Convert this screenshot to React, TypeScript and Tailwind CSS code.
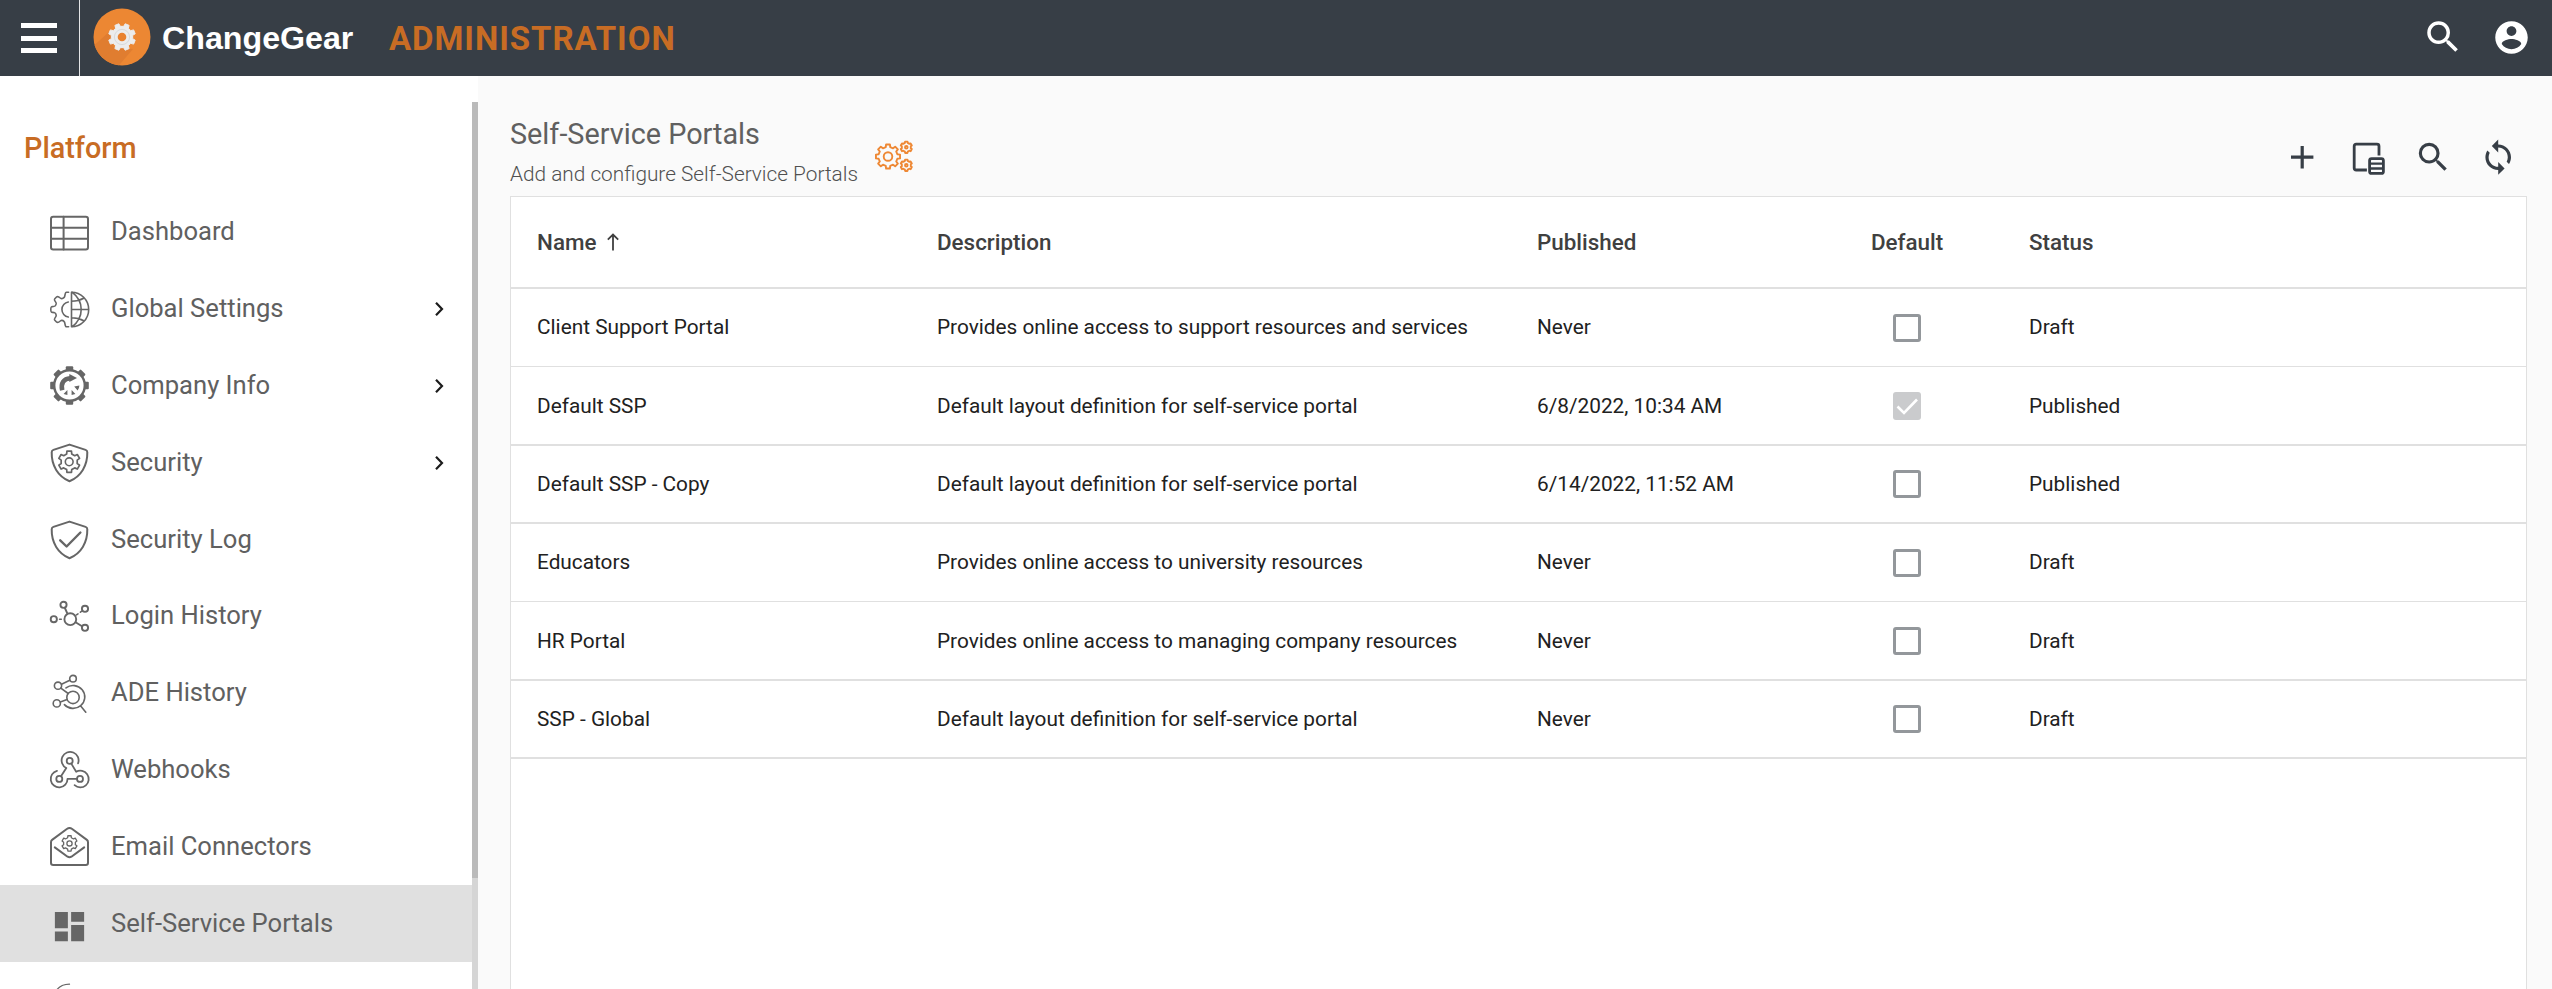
import React from "react";
import { MdAdd, MdDashboard, MdSearch } from "react-icons/md";

/** Builds the outline of a cog with n teeth round (cx, cy). */
function cog(cx: number, cy: number, outer: number, inner: number, n: number, phase = 0): string {
  const step = (Math.PI * 2) / n;
  const pts: string[] = [];
  for (let i = 0; i < n; i++) {
    const a = i * step + phase - Math.PI / 2;
    const corners: [number, number][] = [
      [a - step * 0.3, inner],
      [a - step * 0.2, outer],
      [a + step * 0.2, outer],
      [a + step * 0.3, inner],
    ];
    for (const [t, r] of corners) {
      pts.push(`${(cx + Math.cos(t) * r).toFixed(2)} ${(cy + Math.sin(t) * r).toFixed(2)}`);
    }
  }
  return `M${pts.join("L")}Z`;
}

function Glyph({ children, width = 2 }: { children: React.ReactNode; width?: number }) {
  return (
    <svg
      viewBox="0 0 39 39"
      className="size-[39px] shrink-0 overflow-visible"
      fill="none"
      stroke="#666666"
      strokeWidth={width}
      strokeLinecap="round"
      strokeLinejoin="round"
    >
      {children}
    </svg>
  );
}

const SHIELD =
  "M19.5 1.6L35.6 6.9Q37.3 7.5 37.3 9.3C37.6 22.5 31 33.5 19.5 38.2C8 33.5 1.4 22.5 1.7 9.3Q1.7 7.5 3.4 6.9Z";

const DashboardIcon = () => (
  <Glyph>
    <rect x="1" y="3.8" width="37" height="32.6" rx="2.2" />
    <path d="M1 14.7H38M1 25.8H38M13.6 3.8V36.5" />
  </Glyph>
);

const GlobalIcon = () => (
  <Glyph width={1.6}>
    <path d="M18.6 2.2H16.5C14.6 2.2 15.4 6.3 14.2 7.4C13 8.6 11.5 9 10.3 8C8.7 6.6 7.6 6 6.5 7L4.6 9C3.5 10.2 6.4 12 6.2 13.7C5.8 16.2 5 16.6 2.5 16.6C1 16.6 .8 17.2 .8 19.5C.8 21.8 1 22.4 2.5 22.4C5 22.4 5.8 22.8 6.2 25.3C6.4 27 3.5 28.8 4.6 30L6.5 32C7.6 33 8.7 32.4 10.3 31C11.5 30 13 30.4 14.2 31.6C15.4 32.7 14.6 36.8 16.5 36.8H18.6" />
    <path d="M18.3 12A7.6 7.6 0 0 0 18.3 27" />
    <path d="M21.5 2.2V36.8A17.2 17.3 0 0 0 21.5 2.2M21.5 19.5H38.6M22 2.2Q31.2 9 31.2 19.5T22 36.8M21.5 11.2Q28.5 11.2 34.2 8M21.5 27.8Q28.5 27.8 34.2 31" />
  </Glyph>
);

const CompanyIcon = () => (
  <Glyph>
    <circle cx="19.5" cy="19.5" r="15.3" strokeWidth="2.4" />
    {[0, 45, 90, 135, 180, 225, 270, 315].map((a) => (
      <path key={a} d="M15.8 4V1.2Q15.8 .2 16.8 .2H22.2Q23.2 .2 23.2 1.2V4Z" fill="#666666" stroke="none" transform={`rotate(${a} 19.5 19.5)`} />
    ))}
    <path d="M12.2 24.2C10.6 17.5 13.6 12.6 20.2 12.2" strokeWidth="4.6" strokeLinecap="butt" />
    <path d="M19.3 8L27 12L19.3 16Z" fill="#666666" stroke="none" />
    <path d="M13.6 27.9L17.4 24V28.9ZM25.4 27.9L21.6 24V28.9ZM29.4 19.6L24.2 20.4L27.6 24.4Q29.3 22.5 29.4 19.6Z" fill="#666666" stroke="none" />
  </Glyph>
);

const SecurityIcon = () => (
  <Glyph>
    <path d={SHIELD} />
    <path d={cog(19.2, 18.8, 10.9, 8.2, 6)} strokeWidth="1.7" />
    <circle cx="19.2" cy="18.8" r="3.9" strokeWidth="1.6" />
  </Glyph>
);

const SecurityLogIcon = () => (
  <Glyph>
    <path d={SHIELD} />
    <path d="M10.2 20.3L16.6 26.5L30.4 12.5" strokeWidth="2.4" />
  </Glyph>
);

const LoginIcon = () => (
  <Glyph width={1.9}>
    <circle cx="20.3" cy="22.2" r="5.9" />
    <circle cx="13.5" cy="7.8" r="3.1" />
    <circle cx="35" cy="11.8" r="3.1" />
    <circle cx="3.8" cy="22.2" r="3.1" />
    <circle cx="35" cy="30.8" r="3.1" />
    <path d="M14.9 11L17.4 16.6M25.6 25.2L32 29.2" />
    <path d="M26.5 17.9L28 16.9M30.4 15.2L31.9 14.1M9.6 22.2H11.3" strokeWidth="1.6" />
  </Glyph>
);

const AdeIcon = () => (
  <Glyph width={1.6}>
    <circle cx="23" cy="4.7" r="3.3" />
    <circle cx="8" cy="11.7" r="3.6" />
    <circle cx="6.8" cy="29.4" r="3.6" />
    <circle cx="23" cy="23.4" r="6.2" />
    <path d="M11.5 10.3L19.8 6.3M10.8 14.2L18.2 19.5M10.4 28L17 25.6" />
    <path d="M16 13.9A11.7 11.4 0 1 1 14.4 30.6M30.7 32L35.8 38.2" />
  </Glyph>
);

const WebhookIcon = () => (
  <Glyph width={1.8}>
    <circle cx="19.7" cy="10.9" r="3" />
    <circle cx="9.3" cy="28.9" r="3" />
    <circle cx="30" cy="28.9" r="3" />
    <path d="M28.1 13.3A8.5 8.5 0 1 0 16.3 18L11 26.2" />
    <path d="M7 20.8A8.4 8.4 0 1 0 17.5 28.9H27" />
    <path d="M21.3 13.6L26.2 21.7A8.4 8.4 0 1 1 24.6 35.2" />
  </Glyph>
);

const EmailIcon = () => (
  <Glyph>
    <path d="M1 15.2Q1 13.7 2.1 12.9L16.8 2Q19.5 .2 22.2 2L36.9 12.9Q38 13.7 38 15.2V35.8Q38 38 35.8 38H3.2Q1 38 1 35.8Z" />
    <path d="M4.8 20.4L17.6 29.7Q19.5 30.9 21.4 29.7L34.2 20.4" />
    <path d={cog(19.5, 16.4, 7.8, 6, 6)} strokeWidth="1.3" />
    <circle cx="19.5" cy="16.4" r="2.6" strokeWidth="1.3" />
  </Glyph>
);

const PortalsIcon = () => <MdDashboard className="relative top-[3px] size-[39px] shrink-0 text-[#666666]" />;

const NextIcon = () => (
  <Glyph width={1.3}>
    <path d="M7 8.6Q11 3.4 19.5 3.2M18 8.6H21" />
  </Glyph>
);

const MENU: { label: string; Icon: () => React.ReactElement; nested?: boolean; active?: boolean }[] = [
  { label: "Dashboard", Icon: DashboardIcon },
  { label: "Global Settings", Icon: GlobalIcon, nested: true },
  { label: "Company Info", Icon: CompanyIcon, nested: true },
  { label: "Security", Icon: SecurityIcon, nested: true },
  { label: "Security Log", Icon: SecurityLogIcon },
  { label: "Login History", Icon: LoginIcon },
  { label: "ADE History", Icon: AdeIcon },
  { label: "Webhooks", Icon: WebhookIcon },
  { label: "Email Connectors", Icon: EmailIcon },
  { label: "Self-Service Portals", Icon: PortalsIcon, active: true },
  { label: "", Icon: NextIcon },
];

function Header() {
  return (
    <header className="flex h-[76px] shrink-0 items-center bg-[#373e46]">
      <div className="flex h-full w-20 items-center border-r border-[#e4e5e6] pl-[21px]">
        <div className="flex w-9 flex-col gap-[7.5px]">
          <span className="h-[5px] bg-white" />
          <span className="h-[5px] bg-white" />
          <span className="h-[5px] bg-white" />
        </div>
      </div>
      <svg viewBox="0 0 58 58" className="relative -top-px ml-[13px] size-[58px]">
        <circle cx="29" cy="29" r="28.5" fill="#ec8733" />
        <path d="M19 39L7.5 47.5A28.5 28.5 0 0 0 26 57.3L40 41Z" fill="#e07d30" />
        <path d="M17 23L1.5 37A28.5 28.5 0 0 0 10 50L21 40Z" fill="#e07d30" />
        <path d={cog(29, 29, 13.6, 10.8, 8, Math.PI / 8)} fill="#ececec" stroke="#ececec" strokeLinejoin="round" />
        <circle cx="29" cy="29" r="7.6" fill="none" stroke="#d9dadb" strokeWidth="1" />
        <circle cx="29" cy="29" r="4.3" fill="#e9822f" />
      </svg>
      <span className="ml-[11px] w-[227px] font-['Liberation_Sans',sans-serif] text-[32.2px] leading-none font-bold text-white">ChangeGear</span>
      <span className="text-[33px] leading-none font-bold tracking-[0.95px] text-[#c86c24]">ADMINISTRATION</span>
      <div className="mr-[21px] ml-auto flex items-center gap-7 text-white">
        <MdSearch className="relative -top-px size-[42px]" />
        <svg viewBox="0 0 24 24" className="relative -top-px size-[39px]" fill="currentColor">
          <path d="M12 2C6.48 2 2 6.48 2 12s4.48 10 10 10 10-4.48 10-10S17.52 2 12 2zm0 3c1.66 0 3 1.34 3 3s-1.34 3-3 3-3-1.34-3-3 1.34-3 3-3zm0 14.2c-2.5 0-4.71-1.28-6-3.22.03-1.99 4-3.08 6-3.08 1.99 0 5.97 1.09 6 3.08-1.29 1.94-3.5 3.22-6 3.22z" />
        </svg>
      </div>
    </header>
  );
}

function Sidebar() {
  return (
    <aside className="flex w-[478px] shrink-0 bg-white pt-[26px]">
      <div className="w-[472px] overflow-hidden">
        <h2 className="flex h-[91.9px] items-center pl-6 text-[28.8px] leading-none font-medium text-[#c86c24]">Platform</h2>
        <ul>
          {MENU.map(({ label, Icon, nested, active }, i) => (
            <li
              key={i}
              className={`flex h-[76.8px] items-center pr-[27px] pl-[50px] ${active ? "bg-[#e0e0e0]" : ""}`}
            >
              <Icon />
              <span className="ml-[22px] text-[25.6px] leading-none text-[#606060]">{label}</span>
              {nested && (
                <svg viewBox="0 0 12 16" className="ml-auto h-4 w-3" fill="none" stroke="#1c1c1c" strokeWidth="2.2">
                  <path d="M3 1.8L9 8L3 14.2" />
                </svg>
              )}
            </li>
          ))}
        </ul>
      </div>
      <div className="w-1.5 bg-[#d5d5d5]">
        <div className="h-[776px] bg-[#bababa]" />
      </div>
    </aside>
  );
}

const ROWS = [
  { name: "Client Support Portal", description: "Provides online access to support resources and services", published: "Never", checked: false, status: "Draft", line: "h-[78px] border-b" },
  { name: "Default SSP", description: "Default layout definition for self-service portal", published: "6/8/2022, 10:34 AM", checked: true, status: "Published", line: "h-[79px] border-b-2 pt-px" },
  { name: "Default SSP - Copy", description: "Default layout definition for self-service portal", published: "6/14/2022, 11:52 AM", checked: false, status: "Published", line: "h-[78px] border-b-2" },
  { name: "Educators", description: "Provides online access to university resources", published: "Never", checked: false, status: "Draft", line: "h-[78px] border-b" },
  { name: "HR Portal", description: "Provides online access to managing company resources", published: "Never", checked: false, status: "Draft", line: "h-[79px] border-b-2 pt-px" },
  { name: "SSP - Global", description: "Default layout definition for self-service portal", published: "Never", checked: false, status: "Draft", line: "h-[78px] border-b-2" },
];

const GRID = "grid grid-cols-[400px_600px_334px_158px_1fr] items-center pl-[26px] leading-none";

function Checkbox({ checked }: { checked: boolean }) {
  if (!checked) return <span className="ml-[22px] size-7 rounded-[3px] border-[3px] border-[#93979b]" />;
  return (
    <span className="ml-[22px] size-7 rounded-[3px] bg-[#cacbcd]">
      <svg viewBox="0 0 28 28" fill="none" stroke="#ffffff" strokeWidth="2.6">
        <path d="M4.5 14.5L11 21L24 7.5" />
      </svg>
    </span>
  );
}

function Table() {
  return (
    <div className="mr-[25px] flex-1 border border-b-0 border-[#e0e0e0] bg-white">
      <div className={`${GRID} h-[92px] border-b-2 border-[#e0e0e0] text-[22.4px] font-medium text-[#404040]`}>
        <span className="flex items-center">
          Name
          <svg viewBox="0 0 14 18" className="ml-2.5 h-[18px] w-3.5" fill="none" stroke="#404040" strokeWidth="1.8">
            <path d="M7 17.5V2M1.8 6.6L7 1.5L12.2 6.6" />
          </svg>
        </span>
        <span>Description</span>
        <span>Published</span>
        <span>Default</span>
        <span>Status</span>
      </div>
      {ROWS.map((r) => (
        <div key={r.name} className={`${GRID} ${r.line} border-[#e0e0e0] text-[20.8px] text-[#212121]`}>
          <span>{r.name}</span>
          <span>{r.description}</span>
          <span>{r.published}</span>
          <Checkbox checked={r.checked} />
          <span>{r.status}</span>
        </div>
      ))}
    </div>
  );
}

function Toolbar() {
  return (
    <div className="mt-[19px] mr-[34.6px] ml-auto flex items-center gap-[27px] text-[#373e46]">
      <MdAdd className="size-[38.4px]" />
      <svg viewBox="0 0 38.4 38.4" className="size-[38.4px] overflow-visible" fill="none" stroke="currentColor" strokeWidth="2.8" strokeLinecap="butt" strokeLinejoin="round">
        <path d="M18.9 32H8.2Q6.2 32 6.2 30V8.2Q6.2 6.2 8.2 6.2H29Q31 6.2 31 8.2V17.6" />
        <rect x="21.6" y="20.6" width="13.8" height="14.8" rx="2" />
        <path d="M21.6 25.6H35.4M21.6 30.5H35.4" strokeWidth="2.4" />
      </svg>
      <MdSearch className="size-[38.4px]" />
      <svg viewBox="0 0 24 24" className="size-[38.4px]" fill="currentColor">
        <path d="M12 4V1L8 5l4 4V6c3.31 0 6 2.69 6 6 0 1.01-.25 1.97-.7 2.8l1.46 1.46C19.54 15.03 20 13.57 20 12c0-4.42-3.58-8-8-8zm0 14c-3.31 0-6-2.69-6-6 0-1.01.25-1.97.7-2.8L5.24 7.74C4.46 8.97 4 10.43 4 12c0 4.42 3.58 8 8 8v3l4-4-4-4v3z" />
      </svg>
    </div>
  );
}

export default function App() {
  return (
    <div className="flex h-[989px] w-full flex-col overflow-hidden bg-[#fafafa] font-[Roboto,sans-serif]">
      <Header />
      <div className="flex min-h-0 flex-1">
        <Sidebar />
        <main className="flex flex-1 flex-col pl-8">
          <div className="flex h-[120px] shrink-0 items-start pt-[43px]">
            <div>
              <h1 className="text-[28.8px] leading-[30px] text-[#606060]">Self-Service Portals</h1>
              <p className="mt-[13px] text-[20.8px] leading-6 font-light text-[#505050]">Add and configure Self-Service Portals</p>
            </div>
            <svg viewBox="0 0 38 31" className="mt-[22px] ml-[17px] h-[31px] w-[38px] overflow-visible" fill="none" stroke="#ee8834" strokeWidth="1.9" strokeLinejoin="round">
              <path d={cog(13, 15.5, 12.2, 9.6, 8)} />
              <circle cx="13" cy="15.5" r="4.3" />
              <path d={cog(31.3, 6.3, 5.8, 4.6, 6)} />
              <circle cx="31.3" cy="6.3" r="1.3" />
              <path d={cog(31.3, 24.3, 5.8, 4.6, 6)} />
              <circle cx="31.3" cy="24.3" r="1.3" />
            </svg>
            <Toolbar />
          </div>
          <Table />
        </main>
      </div>
    </div>
  );
}
